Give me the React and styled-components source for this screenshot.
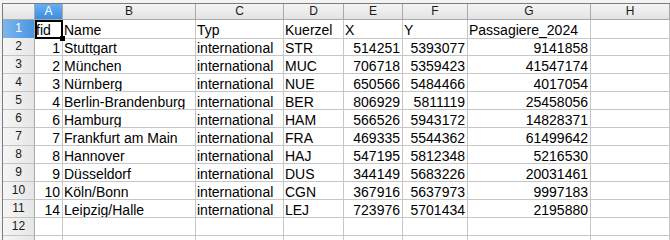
import React from "react";
import styled, { createGlobalStyle, css } from "styled-components";

const GlobalStyle = createGlobalStyle`
  html, body { margin: 0; padding: 0; background: #f3f3f3; }
  body { font-family: "Liberation Sans", Arial, sans-serif; overflow: hidden; }
`;

const COLS = "32px 28px 133px 88px 60px 59px 65px 123px 1fr";

const Window = styled.div`
  width: 670px;
  height: 240px;
  padding: 3px 0 0 2px;
  box-sizing: border-box;
  background: #f3f3f3;
  overflow: hidden;
`;

const Sheet = styled.div`
  border-top: 1px solid #7b7b7b;
  border-left: 1px solid #7b7b7b;
  background: #ffffff;
  height: 100%;
`;

const Row = styled.div`
  display: grid;
  grid-template-columns: ${COLS};
  height: ${(p) => (p.$header ? 16 : 18)}px;
`;

const ColHead = styled.div`
  box-sizing: border-box;
  border-right: 1px solid #a9a9a9;
  border-bottom: 1px solid #a9a9a9;
  background: ${(p) =>
    p.$active
      ? "linear-gradient(#6aaef0, #3a8ee0)"
      : "linear-gradient(#f4f4f4, #e3e3e3)"};
  color: ${(p) => (p.$active ? "#ffffff" : "#1a1a1a")};
  font-size: 12px;
  line-height: 15px;
  text-align: center;
`;

const RowHead = styled.div`
  box-sizing: border-box;
  border-right: 1px solid #a9a9a9;
  border-bottom: 1px solid #c4c4c4;
  background: ${(p) =>
    p.$active
      ? "linear-gradient(to right, #7cb7ee, #4a95e0)"
      : "linear-gradient(to right, #f6f6f6, #e6e6e6)"};
  color: ${(p) => (p.$active ? "#ffffff" : "#1a1a1a")};
  font-size: 12px;
  line-height: 17px;
  text-align: center;
`;

const Cell = styled.div`
  position: relative;
  box-sizing: border-box;
  border-right: 1px solid #c6c6c6;
  border-bottom: 1px solid #c6c6c6;
  font-size: 14px;
  line-height: 16px;
  padding: 2px ${(p) => (p.$num ? "2px" : "1px")} 0 1px;
  text-align: ${(p) => (p.$num ? "right" : "left")};
  color: #000000;
  white-space: nowrap;
  overflow: ${(p) => (p.$cursor ? "visible" : "hidden")};
  ${(p) =>
    p.$cursor &&
    css`
      z-index: 2;
      &::after {
        content: "";
        position: absolute;
        top: 0;
        left: 0;
        right: -1px;
        bottom: -1px;
        border: 2px solid #000000;
        pointer-events: none;
      }
      &::before {
        content: "";
        position: absolute;
        right: -3px;
        bottom: -3px;
        width: 5px;
        height: 5px;
        background: #000000;
        z-index: 3;
      }
    `}
`;

const letters = ["A", "B", "C", "D", "E", "F", "G", "H"];

const header = ["fid", "Name", "Typ", "Kuerzel", "X", "Y", "Passagiere_2024"];

const data = [
  [1, "Stuttgart", "international", "STR", 514251, 5393077, 9141858],
  [2, "München", "international", "MUC", 706718, 5359423, 41547174],
  [3, "Nürnberg", "international", "NUE", 650566, 5484466, 4017054],
  [4, "Berlin-Brandenburg", "international", "BER", 806929, 5811119, 25458056],
  [6, "Hamburg", "international", "HAM", 566526, 5943172, 14828371],
  [7, "Frankfurt am Main", "international", "FRA", 469335, 5544362, 61499642],
  [8, "Hannover", "international", "HAJ", 547195, 5812348, 5216530],
  [9, "Düsseldorf", "international", "DUS", 344149, 5683226, 20031461],
  [10, "Köln/Bonn", "international", "CGN", 367916, 5637973, 9997183],
  [14, "Leipzig/Halle", "international", "LEJ", 723976, 5701434, 2195880],
];

export default function App() {
  return (
    <>
      <GlobalStyle />
      <Window>
        <Sheet>
          <Row $header>
            <ColHead />
            {letters.map((l, i) => (
              <ColHead key={l} $active={i === 0}>
                {l}
              </ColHead>
            ))}
          </Row>
          <Row>
            <RowHead $active>1</RowHead>
            {header.map((h, i) => (
              <Cell key={h} $cursor={i === 0}>
                {h}
              </Cell>
            ))}
            <Cell />
          </Row>
          {data.map((r, ri) => (
            <Row key={ri}>
              <RowHead>{ri + 2}</RowHead>
              {r.map((v, ci) => (
                <Cell key={ci} $num={typeof v === "number"}>
                  {v}
                </Cell>
              ))}
              <Cell />
            </Row>
          ))}
          <Row>
            <RowHead>12</RowHead>
            {letters.map((l) => (
              <Cell key={l} />
            ))}
          </Row>
          <Row>
            <RowHead />
            {letters.map((l) => (
              <Cell key={l} />
            ))}
          </Row>
        </Sheet>
      </Window>
    </>
  );
}
